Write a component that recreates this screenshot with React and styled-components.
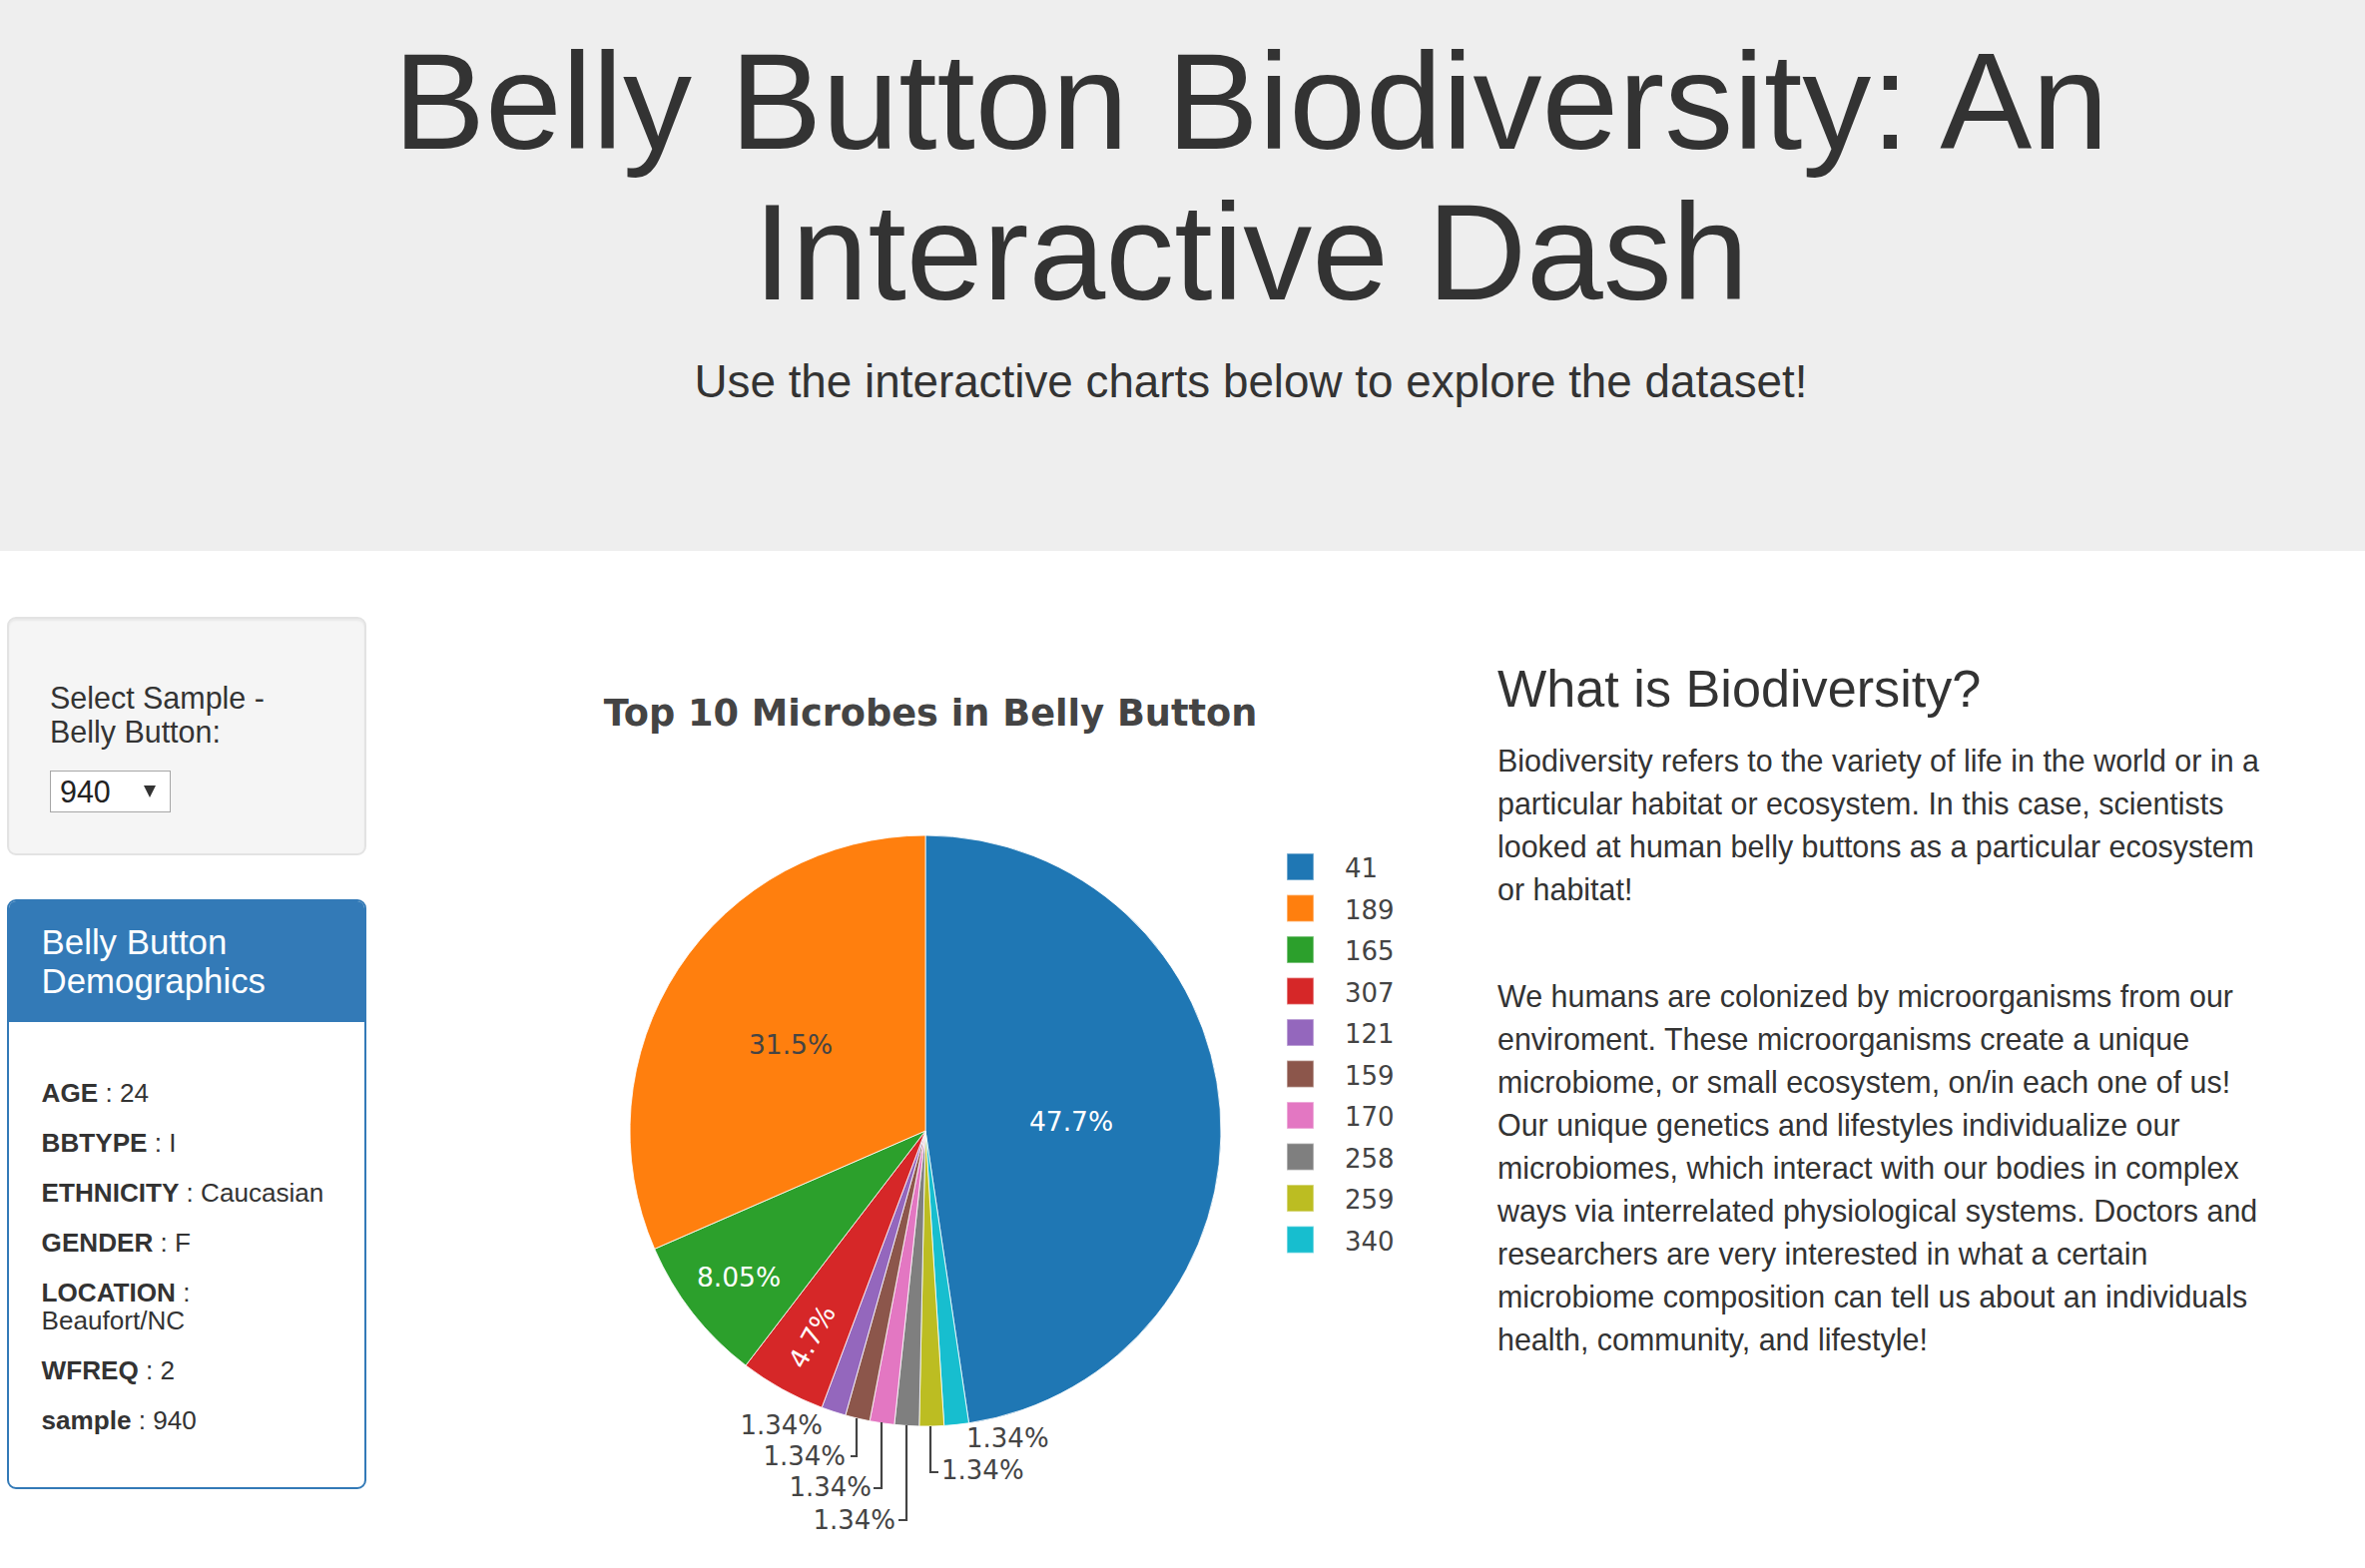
import React from 'react';
import styled, { createGlobalStyle } from 'styled-components';

const GlobalStyle = createGlobalStyle`
  * { box-sizing: border-box; }
  html, body { margin: 0; padding: 0; background: #fff; }
  body {
    font-family: "Liberation Sans", Arial, Helvetica, sans-serif;
    font-size: 30.45px;
    line-height: 43px;
    color: #333;
  }
`;

// ==== Jumbotron
const Jumbotron = styled.header`
  background: #eee;
  padding: 26px 0 104px 137px;
  margin-bottom: 66px;
  text-align: center;
`;

const Title = styled.h1`
  margin: 0 0 22px;
  font-size: 138px;
  line-height: 151px;
  font-weight: normal;
  color: #333;
`;

const Lead = styled.p`
  margin: 0 0 33px;
  font-size: 45.8px;
  line-height: 65.2px;
`;

// ==== Layout
const Row = styled.main`
  display: flex;
  align-items: flex-start;
  padding-left: 7px;
`;

const Sidebar = styled.aside`
  flex: none;
  width: 360px;
`;

const ChartBox = styled.section`
  flex: none;
  width: 1000px;
  margin-left: 53px;
`;

const Info = styled.section`
  flex: none;
  width: 780px;
  margin-left: 80px;
`;

// ==== Sample selector
const Well = styled.div`
  background: #f5f5f5;
  border: 2px solid #e3e3e3;
  border-radius: 9px;
  box-shadow: inset 0 2px 2px rgba(0, 0, 0, 0.05);
  padding: 41px;
  margin-bottom: 44px;
`;

const SelectLabel = styled.h6`
  margin: 22px 0;
  font-size: 30.45px;
  line-height: 33.5px;
  font-weight: normal;
`;

const Dropdown = styled.div`
  position: relative;
  width: 121px;
  height: 42px;
  border: 1px solid #a6a6a6;
  background: #fff;
`;

const NativeSelect = styled.select`
  appearance: none;
  display: block;
  width: 100%;
  height: 100%;
  border: 0;
  background: transparent;
  padding: 0 0 0 9px;
  font: 30.45px "Liberation Sans", Arial, sans-serif;
  color: #222;
  outline: none;
`;

const Caret = styled.span`
  position: absolute;
  right: 14px;
  top: 14px;
  width: 0;
  height: 0;
  border-left: 6.5px solid transparent;
  border-right: 6.5px solid transparent;
  border-top: 12px solid #333;
  pointer-events: none;
`;

// ==== Demographics panel
const Panel = styled.div`
  border: 2px solid #337ab7;
  border-radius: 9px;
  overflow: hidden;
  background: #fff;
`;

const PanelHeading = styled.div`
  background: #337ab7;
  color: #fff;
  padding: 22px 32.6px;
`;

const PanelTitle = styled.h3`
  margin: 0;
  font-size: 34.8px;
  line-height: 38.3px;
  font-weight: normal;
`;

const PanelBody = styled.div`
  padding: 35.5px 32.6px 30.5px;
`;

const Fact = styled.h6`
  margin: 21.5px 0;
  font-size: 26.1px;
  line-height: 28.5px;
  font-weight: normal;
  color: #333;

  b { font-weight: bold; }
`;

// ==== Info text
const InfoTitle = styled.h3`
  margin: 43.5px 0 21.75px;
  font-size: 52.2px;
  line-height: 57.4px;
  font-weight: normal;
`;

const Paragraph = styled.p`
  margin: ${p => (p.$spaced ? '64px' : '0')} 0 21.75px;
`;

// ==== Chart
const ChartSvg = styled.svg`
  display: block;
  overflow: visible;
  font-family: "DejaVu Sans", Verdana, sans-serif;
`;

const CX = 507;
const CY = 515;
const R = 296;

const slices = [
  { id: '41', value: 71, color: '#1f77b4' },
  { id: '189', value: 47, color: '#ff7f0e' },
  { id: '165', value: 12, color: '#2ca02c' },
  { id: '307', value: 7, color: '#d62728' },
  { id: '121', value: 2, color: '#9467bd' },
  { id: '159', value: 2, color: '#8c564b' },
  { id: '170', value: 2, color: '#e377c2' },
  { id: '258', value: 2, color: '#7f7f7f' },
  { id: '259', value: 2, color: '#bcbd22' },
  { id: '340', value: 2, color: '#17becf' }
];

// clockwise from twelve o'clock
const drawOrder = [0, 9, 8, 7, 6, 5, 4, 3, 2, 1];

const point = deg => {
  const a = (deg * Math.PI) / 180;
  return [CX + R * Math.sin(a), CY - R * Math.cos(a)];
};

const total = slices.reduce((s, d) => s + d.value, 0);

const arcs = (() => {
  let start = 0;
  return drawOrder.map(i => {
    const sweep = (slices[i].value / total) * 360;
    const end = start + sweep;
    const [x0, y0] = point(start);
    const [x1, y1] = point(end);
    const large = sweep > 180 ? 1 : 0;
    const d = `M${CX},${CY} L${x0},${y0} A${R},${R} 0 ${large} 1 ${x1},${y1} Z`;
    start = end;
    return { d, color: slices[i].color, id: slices[i].id };
  });
})();

const insideLabels = [
  { text: '47.7%', x: 653, y: 505, fill: '#fff' },
  { text: '31.5%', x: 372, y: 428, fill: '#444' },
  { text: '8.05%', x: 320, y: 661, fill: '#fff' },
  { text: '4.7%', x: 393, y: 721, fill: '#fff', rotate: -60.8 }
];

const outsideLabels = [
  { x: 404, y: 819, anchor: 'end' },
  { x: 427, y: 850, anchor: 'end', line: 'M438,803 V841 H432' },
  { x: 453, y: 881, anchor: 'end', line: 'M463,807 V873 H455' },
  { x: 477, y: 914, anchor: 'end', line: 'M488,810 V905 H480' },
  { x: 523, y: 864, anchor: 'start', line: 'M512,811 V857 H520' },
  { x: 548, y: 832, anchor: 'start' }
];

const PieChart = () => (
  <ChartSvg width="1000" height="930" viewBox="0 0 1000 930">
    <text x="512" y="109" textAnchor="middle" fontSize="36.7" fontWeight="bold" fill="#444">
      Top 10 Microbes in Belly Button
    </text>

    {arcs.map(a => (
      <path key={a.id} d={a.d} fill={a.color} stroke="#fff" strokeWidth="1" strokeOpacity="0.8" />
    ))}

    {insideLabels.map(l => (
      <text
        key={l.text}
        x={l.x}
        y={l.y}
        dy="0.36em"
        textAnchor="middle"
        fontSize="26.5"
        fill={l.fill}
        transform={l.rotate ? `rotate(${l.rotate} ${l.x} ${l.y})` : undefined}
      >
        {l.text}
      </text>
    ))}

    {outsideLabels.map((l, i) => (
      <g key={i}>
        {l.line && <path d={l.line} fill="none" stroke="#444" strokeWidth="2.2" />}
        <text x={l.x} y={l.y} textAnchor={l.anchor} fontSize="26" fill="#444">
          1.34%
        </text>
      </g>
    ))}

    {slices.map((s, i) => (
      <g key={s.id}>
        <rect
          x="869"
          y={237 + i * 41.5}
          width="27"
          height="27"
          fill={s.color}
          stroke="#fff"
          strokeOpacity="0.5"
          strokeWidth="1.5"
        />
        <text x="927" y={261 + i * 41.5} fontSize="26" fill="#444">
          {s.id}
        </text>
      </g>
    ))}
  </ChartSvg>
);

const facts = [
  ['AGE', '24'],
  ['BBTYPE', 'I'],
  ['ETHNICITY', 'Caucasian'],
  ['GENDER', 'F'],
  ['LOCATION', 'Beaufort/NC'],
  ['WFREQ', '2'],
  ['sample', '940']
];

export default function App() {
  return (
    <>
      <GlobalStyle />
      <Jumbotron>
        <Title>Belly Button Biodiversity: An Interactive Dash</Title>
        <Lead>Use the interactive charts below to explore the dataset!</Lead>
      </Jumbotron>

      <Row>
        <Sidebar>
          <Well>
            <SelectLabel>Select Sample - Belly Button:</SelectLabel>
            <Dropdown>
              <NativeSelect defaultValue="940">
                <option value="940">940</option>
                <option value="941">941</option>
                <option value="943">943</option>
              </NativeSelect>
              <Caret />
            </Dropdown>
          </Well>

          <Panel>
            <PanelHeading>
              <PanelTitle>Belly Button Demographics</PanelTitle>
            </PanelHeading>
            <PanelBody>
              {facts.map(([k, v]) => (
                <Fact key={k}>
                  <b>{k}</b> : {v}
                </Fact>
              ))}
            </PanelBody>
          </Panel>
        </Sidebar>

        <ChartBox>
          <PieChart />
        </ChartBox>

        <Info>
          <InfoTitle>What is Biodiversity?</InfoTitle>
          <Paragraph>
            Biodiversity refers to the variety of life in the world or in a particular habitat or
            ecosystem. In this case, scientists looked at human belly buttons as a particular
            ecosystem or habitat!
          </Paragraph>
          <Paragraph $spaced>
            We humans are colonized by microorganisms from our enviroment. These microorganisms
            create a unique microbiome, or small ecosystem, on/in each one of us! Our unique
            genetics and lifestyles individualize our microbiomes, which interact with our bodies
            in complex ways via interrelated physiological systems. Doctors and researchers are
            very interested in what a certain microbiome composition can tell us about an
            individuals health, community, and lifestyle!
          </Paragraph>
        </Info>
      </Row>
    </>
  );
}
